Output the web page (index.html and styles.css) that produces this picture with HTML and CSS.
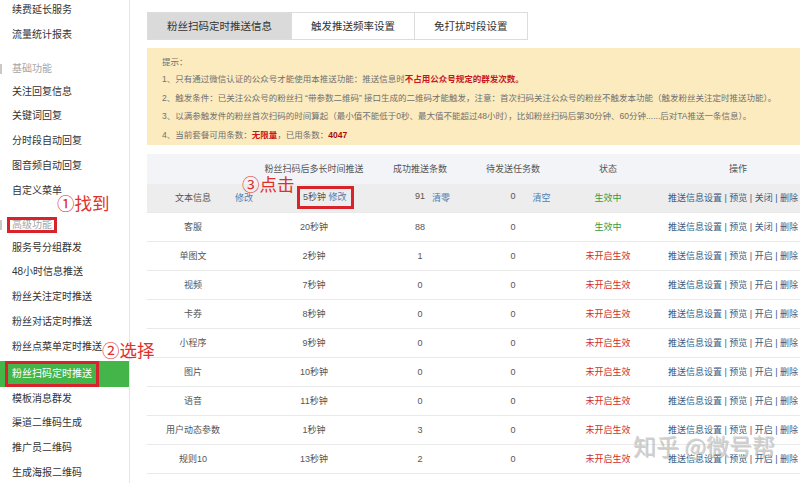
FILE: index.html
```html
<!DOCTYPE html>
<html lang="zh-CN">
  <head>
    <meta charset="UTF-8" />
    <meta name="viewport" content="width=device-width, initial-scale=1.0" />
    <title>粉丝扫码定时推送</title>
    <link rel="stylesheet" href="styles.css">
  </head>
  <body>
    <div class="page">
      <aside class="sidebar">
        <ul class="nav">
          <li>续费延长服务</li>
          <li>流量统计报表</li>
          <li class="nav-head">基础功能</li>
          <li>关注回复信息</li>
          <li>关键词回复</li>
          <li>分时段自动回复</li>
          <li>图音频自动回复</li>
          <li>自定义菜单</li>
          <li class="nav-head"><span class="mark">高级功能</span></li>
          <li>服务号分组群发</li>
          <li>48小时信息推送</li>
          <li>粉丝关注定时推送</li>
          <li>粉丝对话定时推送</li>
          <li>粉丝点菜单定时推送</li>
          <li class="active"><span class="mark mark-wide">粉丝扫码定时推送</span></li>
          <li>模板消息群发</li>
          <li>渠道二维码生成</li>
          <li>推广员二维码</li>
          <li>生成海报二维码</li>
        </ul>
      </aside>

      <main class="main">
        <div class="tabs">
          <div class="tab current">粉丝扫码定时推送信息</div>
          <div class="tab">触发推送频率设置</div>
          <div class="tab">免打扰时段设置</div>
        </div>

        <div class="notice">
          <p class="notice-title">提示：</p>
          <p>1、只有通过微信认证的公众号才能使用本推送功能：推送信息时<b class="warn">不占用公众号规定的群发次数。</b></p>
          <p>2、触发条件：已关注公众号的粉丝扫 “带参数二维码” 接口生成的二维码才能触发，注意：首次扫码关注公众号的粉丝不触发本功能（触发粉丝关注定时推送功能）。</p>
          <p>3、以满参触发件的粉丝首次扫码的时间算起（最小值不能低于0秒、最大值不能超过48小时），比如粉丝扫码后第30分钟、60分钟......后对TA推送一条信息）。</p>
          <p>4、当前套餐可用条数：<b class="warn">无限量</b>，已用条数：<b class="count">4047</b></p>
        </div>

        <div class="table">
          <div class="row row-head">
            <div class="cell"></div>
            <div class="cell">粉丝扫码后多长时间推送</div>
            <div class="cell">成功推送条数</div>
            <div class="cell">待发送任务数</div>
            <div class="cell">状态</div>
            <div class="cell">操作</div>
          </div>
          <div class="row row-hover">
            <div class="cell split c-name"><span class="main-val">文本信息</span><a class="link extra">修改</a></div>
            <div class="cell cell-marked"><span class="mark mark-cell">5秒钟 <a class="link">修改</a></span></div>
            <div class="cell split c-count"><span class="main-val">91</span><a class="link extra">清零</a></div>
            <div class="cell split c-wait"><span class="main-val">0</span><a class="link extra">清空</a></div>
            <div class="cell on">生效中</div>
            <div class="cell actions">推送信息设置 | 预览 | 关闭 | 删除</div>
          </div>
          <div class="row">
            <div class="cell">客服</div>
            <div class="cell">20秒钟</div>
            <div class="cell">88</div>
            <div class="cell">0</div>
            <div class="cell on">生效中</div>
            <div class="cell actions">推送信息设置 | 预览 | 关闭 | 删除</div>
          </div>
          <div class="row">
            <div class="cell">单图文</div>
            <div class="cell">2秒钟</div>
            <div class="cell">1</div>
            <div class="cell">0</div>
            <div class="cell off">未开启生效</div>
            <div class="cell actions">推送信息设置 | 预览 | 开启 | 删除</div>
          </div>
          <div class="row">
            <div class="cell">视频</div>
            <div class="cell">7秒钟</div>
            <div class="cell">0</div>
            <div class="cell">0</div>
            <div class="cell off">未开启生效</div>
            <div class="cell actions">推送信息设置 | 预览 | 开启 | 删除</div>
          </div>
          <div class="row">
            <div class="cell">卡券</div>
            <div class="cell">8秒钟</div>
            <div class="cell">0</div>
            <div class="cell">0</div>
            <div class="cell off">未开启生效</div>
            <div class="cell actions">推送信息设置 | 预览 | 开启 | 删除</div>
          </div>
          <div class="row">
            <div class="cell">小程序</div>
            <div class="cell">9秒钟</div>
            <div class="cell">0</div>
            <div class="cell">0</div>
            <div class="cell off">未开启生效</div>
            <div class="cell actions">推送信息设置 | 预览 | 开启 | 删除</div>
          </div>
          <div class="row">
            <div class="cell">图片</div>
            <div class="cell">10秒钟</div>
            <div class="cell">0</div>
            <div class="cell">0</div>
            <div class="cell off">未开启生效</div>
            <div class="cell actions">推送信息设置 | 预览 | 开启 | 删除</div>
          </div>
          <div class="row">
            <div class="cell">语音</div>
            <div class="cell">11秒钟</div>
            <div class="cell">0</div>
            <div class="cell">0</div>
            <div class="cell off">未开启生效</div>
            <div class="cell actions">推送信息设置 | 预览 | 开启 | 删除</div>
          </div>
          <div class="row">
            <div class="cell">用户动态参数</div>
            <div class="cell">1秒钟</div>
            <div class="cell">3</div>
            <div class="cell">0</div>
            <div class="cell off">未开启生效</div>
            <div class="cell actions">推送信息设置 | 预览 | 开启 | 删除</div>
          </div>
          <div class="row">
            <div class="cell">规则10</div>
            <div class="cell">13秒钟</div>
            <div class="cell">2</div>
            <div class="cell">0</div>
            <div class="cell off">未开启生效</div>
            <div class="cell actions">推送信息设置 | 预览 | 开启 | 删除</div>
          </div>
        </div>
      </main>

      <div class="note note-find">①找到</div>
      <div class="note note-pick">②选择</div>
      <div class="note note-click">③点击</div>
      <div class="watermark">知乎 @微号帮</div>
    </div>
  </body>
</html>
```

FILE: styles.css
```css
body {
  margin: 0;
  font-family: "Liberation Sans", "Noto Sans CJK SC", sans-serif;
  color: #333;
  background-color: #fff;
}

.page {
  position: relative;
  display: flex;
  width: 800px;
  height: 483px;
  overflow: hidden;
}

/* sidebar */
.sidebar {
  flex: 0 0 129px;
  border-right: 1px solid #e6e6e6;
}

.nav {
  list-style: none;
  margin: -2px 0 0;
  padding: 0;
  font-size: 10px;
}

.nav li {
  height: 24.8px;
  line-height: 24.8px;
  padding-left: 12px;
  white-space: nowrap;
}

.nav .nav-head {
  position: relative;
  height: 32px;
  line-height: 22px;
  padding-top: 10px;
  box-sizing: border-box;
  color: #a5a5a5;
}

.nav .nav-head::before {
  content: "";
  position: absolute;
  left: 0;
  top: 16px;
  width: 2px;
  height: 10px;
  background-color: #c9c9c9;
}

.nav .active {
  height: 26px;
  line-height: 26px;
  margin-top: 1px;
  background-color: #44b549;
  color: #fff;
}

/* red annotation boxes */
.mark {
  display: inline-block;
  line-height: 10px;
  padding: 0 2px;
  margin: 0 -2px;
  outline: 3px solid #d8232c;
}

.mark-wide {
  padding: 5px 4px;
  margin: -5px -4px;
}

.mark-cell {
  line-height: 9px;
  padding: 4px 4px 4px 3px;
  margin: 0;
}

.note {
  position: absolute;
  font-family: "Noto Sans CJK SC", sans-serif;
  font-size: 17.5px;
  line-height: 20px;
  color: #e0302c;
  white-space: nowrap;
}

.note-find {
  left: 57px;
  top: 193px;
}

.note-pick {
  left: 102px;
  top: 340px;
}

.note-click {
  left: 242px;
  top: 174px;
}

.watermark {
  position: absolute;
  left: 633px;
  top: 430px;
  font-family: "Noto Sans CJK SC", sans-serif;
  font-size: 23px;
  line-height: 30px;
  color: rgba(205, 205, 205, 0.85);
  text-shadow: 1px 1px 0 rgba(110, 110, 110, 0.35);
  white-space: nowrap;
}

/* main */
.main {
  flex: 0 0 688px;
  padding: 12px 0 0 17px;
}

.tabs {
  display: flex;
}

.tab {
  height: 26px;
  line-height: 26px;
  padding: 0 19px;
  border: 1px solid #dcdcdc;
  border-left: none;
  font-size: 10.5px;
  color: #333;
  white-space: nowrap;
}

.tab:first-child {
  border-left: 1px solid #dcdcdc;
}

.tab.current {
  background-color: #dadada;
}

.notice {
  margin-top: 8px;
  padding: 6px 0 0 15px;
  background-color: #fcebbe;
  font-size: 8.5px;
  color: #707070;
  white-space: nowrap;
}

.notice p {
  margin: 0;
  line-height: 18.7px;
}

.notice .notice-title {
  line-height: 16px;
}

.notice .warn {
  color: #c8161d;
}

.notice .count {
  color: #a80d0d;
}

/* table */
.table {
  margin-top: 9px;
  font-size: 9px;
  color: #555;
}

.row {
  display: grid;
  grid-template-columns: 92px 150px 62px 124px 66px 194px;
  height: 28px;
  align-items: center;
  border-bottom: 1px solid #e9e9e9;
}

.row-head {
  height: 30px;
  border-bottom: none;
  background-color: #f3f4f8;
}

.row-hover {
  background-color: #ededed;
}

.cell {
  text-align: center;
  white-space: nowrap;
}

.split {
  display: grid;
  grid-template-columns: minmax(0, 1fr) auto minmax(0, 1fr);
}

.split .main-val {
  grid-column: 2;
}

.split .extra {
  grid-column: 3;
  justify-self: start;
}

.c-name .extra {
  margin-left: 24px;
}

.c-count .extra {
  margin-left: 7px;
}

.c-wait .extra {
  margin-left: 17px;
}

.cell-marked {
  text-align: left;
  padding-left: 61px;
}

.link {
  color: #4f7cb3;
}

.on {
  color: #3a9a3a;
}

.off {
  color: #cf2f2a;
}

.actions {
  text-align: left;
  padding-left: 27px;
  color: #3b5b80;
}
```
